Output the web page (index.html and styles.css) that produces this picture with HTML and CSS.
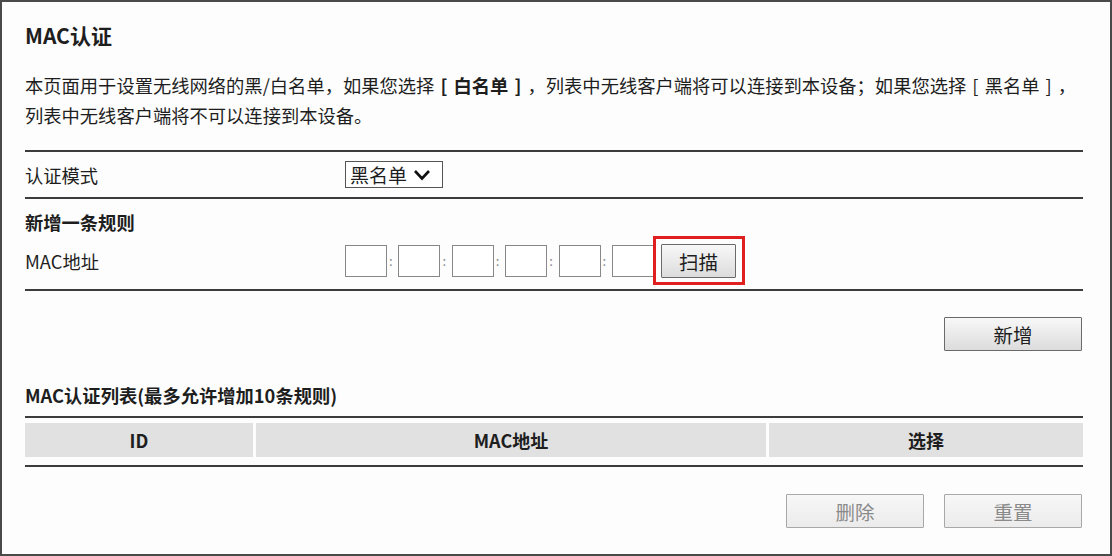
FILE: index.html
```html
<!DOCTYPE html>
<html lang="zh-CN">
<head>
  <meta charset="UTF-8" />
  <title>MAC认证</title>
  <link rel="stylesheet" href="styles.css">
</head>
<body>
  <div class="frame">
    <h1>MAC认证</h1>
    <p class="intro">本页面用于设置无线网络的黑/白名单，如果您选择&nbsp;<b>[ 白名单 ]</b>&nbsp;，列表中无线客户端将可以连接到本设备；如果您选择&nbsp;[ 黑名单 ]&nbsp;，<br>列表中无线客户端将不可以连接到本设备。</p>

    <hr class="rule">
    <div class="row mode-row">
      <label class="label">认证模式</label>
      <div class="select">
        <span>黑名单</span>
        <svg width="18" height="12" viewBox="0 0 18 12"><path d="M2 2 L9 9.5 L16 2" fill="none" stroke="#111" stroke-width="2.6"/></svg>
      </div>
    </div>
    <hr class="rule">

    <div class="add-rule">
      <div class="sub-title">新增一条规则</div>
      <div class="row mac-row">
        <label class="label">MAC地址</label>
        <div class="mac-fields">
          <input class="mac-box" type="text"><span class="colon">:</span>
          <input class="mac-box" type="text"><span class="colon">:</span>
          <input class="mac-box" type="text"><span class="colon">:</span>
          <input class="mac-box" type="text"><span class="colon">:</span>
          <input class="mac-box" type="text"><span class="colon">:</span>
          <input class="mac-box" type="text">
          <div class="highlight"><button class="btn scan">扫描</button></div>
        </div>
      </div>
    </div>
    <hr class="rule">

    <div class="actions add-actions">
      <button class="btn">新增</button>
    </div>

    <div class="list-title">MAC认证列表(最多允许增加10条规则)</div>
    <hr class="rule">
    <div class="table-head">
      <div class="cell">ID</div>
      <div class="cell">MAC地址</div>
      <div class="cell">选择</div>
    </div>
    <hr class="rule">

    <div class="actions bottom-actions">
      <button class="btn" disabled>删除</button>
      <button class="btn" disabled>重置</button>
    </div>
  </div>
</body>
</html>
```

FILE: styles.css
```css
* {
  box-sizing: border-box;
}
body {
  margin: 0;
  background: #fdfdfd;
  font-family: "Noto Sans CJK SC", "Noto Sans", sans-serif;
  color: #1e1e1e;
}
.frame {
  width: 1112px;
  height: 556px;
  border: 2px solid #4a4a4a;
  padding: 20px 27px 0 23px;
  background: #fdfdfd;
}
h1 {
  margin: 0;
  font-size: 21px;
  line-height: 26px;
  font-weight: bold;
}
.intro {
  margin: 22px 0 0;
  font-size: 18.3px;
  line-height: 30px;
  white-space: nowrap;
  word-spacing: 2px;
}
.intro b {
  font-weight: bold;
}
.rule {
  margin: 0;
  border: 0;
  height: 2px;
  background: #3c3c3c;
}
.intro + .rule {
  margin-top: 20px;
}
.row {
  display: flex;
  align-items: center;
}
.label {
  width: 320px;
  font-size: 18.3px;
}
.mode-row {
  height: 45px;
}
.select {
  display: flex;
  align-items: center;
  gap: 6px;
  height: 27px;
  width: 98px;
  padding: 0 6px 0 4px;
  border: 1px solid #555;
  font-size: 19px;
  background: #fff;
}
.add-rule {
  padding: 10px 0 3px;
}
.sub-title {
  font-size: 18.3px;
  font-weight: bold;
  line-height: 26px;
}
.mac-row {
  height: 51px;
}
.mac-fields {
  display: flex;
  align-items: center;
}
.mac-box {
  width: 42px;
  height: 32px;
  border: 1px solid #888;
  background: #fff;
  padding: 0;
}
.colon {
  width: 11.4px;
  text-align: left;
  padding-left: 2px;
  color: #888;
  font-size: 13px;
}
.highlight {
  margin-left: -1px;
  border: 3px solid #e0201e;
  padding: 5px 6px 4px 5px;
}
.btn {
  height: 34px;
  width: 138px;
  border: 1px solid #6a6a6a;
  border-radius: 1px;
  background: linear-gradient(#f8f8f8, #dcdcdc);
  font-family: inherit;
  font-size: 19.5px;
  color: #1e1e1e;
  padding: 0;
}
.btn.scan {
  width: 75px;
  height: 34px;
}
.btn:disabled {
  border-color: #a8a8a8;
  background: linear-gradient(#f7f7f7, #ebebeb);
  color: #8a8a8a;
}
.actions {
  display: flex;
  justify-content: flex-end;
  gap: 20px;
  padding-right: 1px;
}
.add-actions {
  margin-top: 26px;
}
.list-title {
  margin-top: 32px;
  font-size: 18.3px;
  font-weight: bold;
  line-height: 24px;
}
.list-title + .rule {
  margin-top: 9px;
}
.table-head {
  display: grid;
  grid-template-columns: 228px 510px 1fr;
  gap: 3px;
  margin: 5px 0 8px;
}
.cell {
  height: 34px;
  background: #e1e1e1;
  font-size: 18px;
  font-weight: bold;
  display: flex;
  align-items: center;
  justify-content: center;
}
.bottom-actions {
  margin-top: 27px;
}
```
